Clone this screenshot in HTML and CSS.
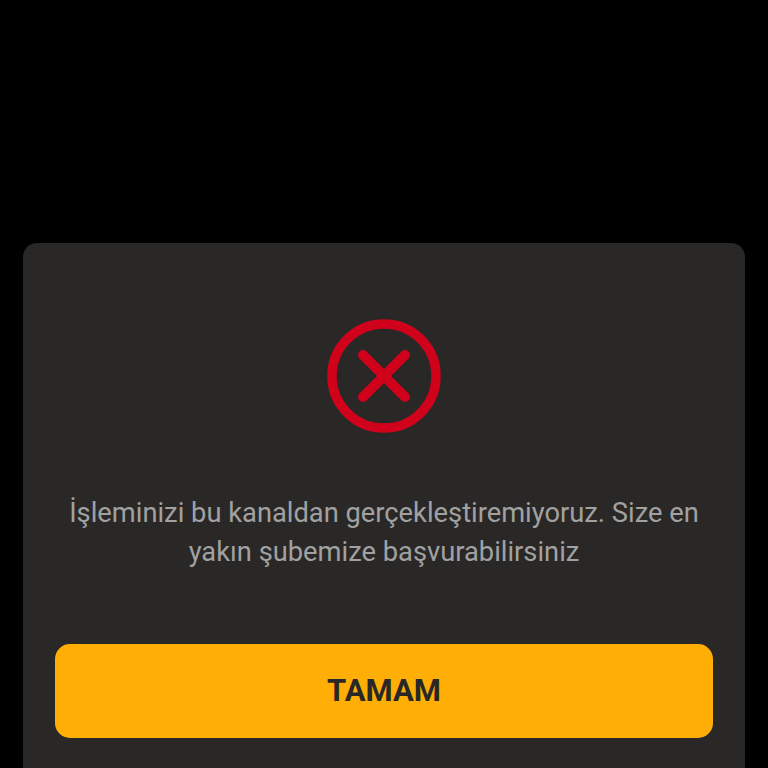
FILE: index.html
```html
<!DOCTYPE html>
<html lang="tr">
<head>
    <meta charset="utf-8">
    <title>Hata</title>
    <link rel="stylesheet" href="styles.css">
</head>
<body>
    <div class="dialog">
        <svg class="dialog-icon" width="114" height="114" viewBox="0 0 114 114" fill="none">
            <circle cx="57" cy="57" r="52" stroke="#d0021b" stroke-width="9.5"/>
            <path d="M36 36L78 78M78 36L36 78" stroke="#d0021b" stroke-width="10" stroke-linecap="round"/>
        </svg>
        <p class="dialog-message">İşleminizi bu kanaldan gerçekleştiremiyoruz. Size en yakın şubemize başvurabilirsiniz</p>
        <button class="dialog-btn">TAMAM</button>
    </div>
</body>
</html>
```

FILE: styles.css
```css
* {
    margin: 0;
    padding: 0;
    box-sizing: border-box;
}

html, body {
    height: 768px;
    overflow: hidden;
}

body {
    font-family: Roboto, sans-serif;
    background: #000;
    padding: 243px 23px 0;
}

.dialog {
    background: #292827;
    height: 540px;
    border-radius: 14px 14px 0 0;
    padding: 76px 32px 0;
    display: flex;
    flex-direction: column;
    align-items: center;
}

.dialog-icon {
    display: block;
    margin-bottom: 61px;
}

.dialog-message {
    width: calc(100% + 20px);
    color: #a1a1a1;
    font-size: 27.3px;
    line-height: 39px;
    text-align: center;
    margin-bottom: 72px;
}

.dialog-btn {
    width: 100%;
    height: 94px;
    border: none;
    border-radius: 15px;
    padding-bottom: 2px;
    background: #ffae05;
    color: #292827;
    font-family: Roboto, sans-serif;
    font-size: 31px;
    font-weight: 700;
}
```
